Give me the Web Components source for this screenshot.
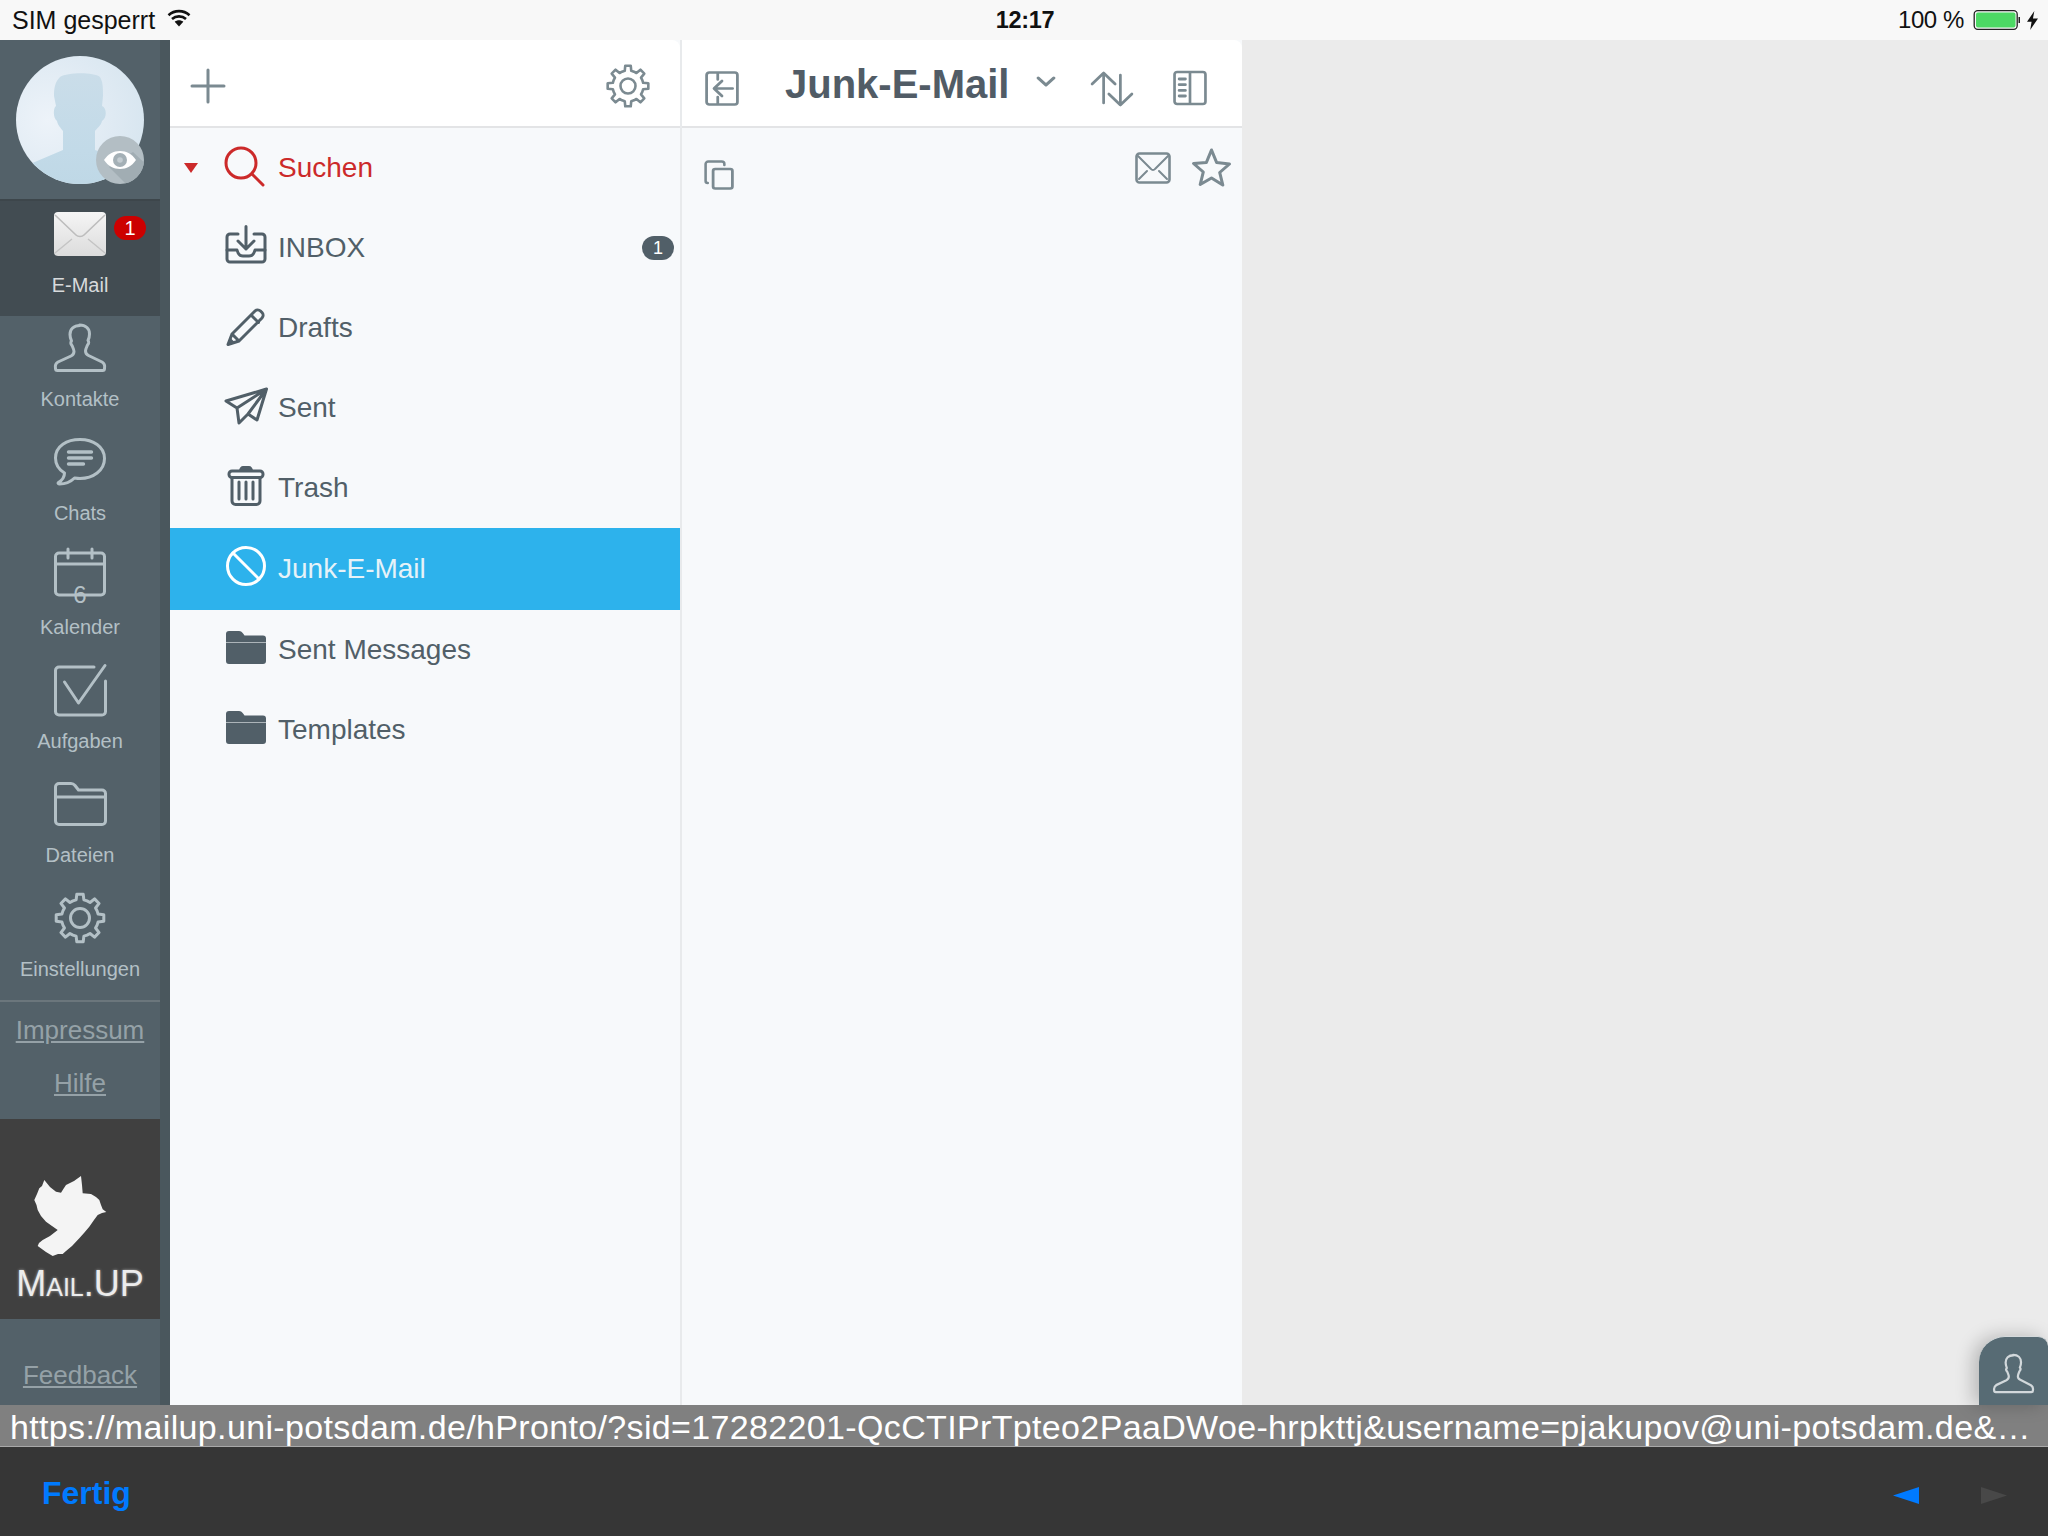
<!DOCTYPE html>
<html lang="de">
<head>
<meta charset="utf-8">
<title>Mail.UP</title>
<style>
html,body{margin:0;padding:0;background:#ebebeb;overflow:hidden}
body{width:2048px;height:1536px;font-family:"Liberation Sans",Arial,sans-serif}
</style>
</head>
<body>
<app-shell>
  <status-bar slot="top"></status-bar>
  <side-nav slot="side">
    <nav-item label="E-Mail" icon="mail" active badge="1"></nav-item>
    <nav-item label="Kontakte" icon="person"></nav-item>
    <nav-item label="Chats" icon="chat"></nav-item>
    <nav-item label="Kalender" icon="calendar"></nav-item>
    <nav-item label="Aufgaben" icon="tasks"></nav-item>
    <nav-item label="Dateien" icon="files"></nav-item>
    <nav-item label="Einstellungen" icon="gearnav"></nav-item>
  </side-nav>
  <folder-panel slot="folders">
    <folder-row label="Suchen" icon="search" tone="red" arrow></folder-row>
    <folder-row label="INBOX" icon="inbox" count="1"></folder-row>
    <folder-row label="Drafts" icon="pencil"></folder-row>
    <folder-row label="Sent" icon="plane"></folder-row>
    <folder-row label="Trash" icon="trash"></folder-row>
    <folder-row label="Junk-E-Mail" icon="block" selected></folder-row>
    <folder-row label="Sent Messages" icon="folder"></folder-row>
    <folder-row label="Templates" icon="folder"></folder-row>
  </folder-panel>
  <list-panel slot="list" title="Junk-E-Mail"></list-panel>
  <contact-tab slot="float"></contact-tab>
  <url-bar slot="url">https://mailup.uni-potsdam.de/hPronto/?sid=17282201-QcCTIPrTpteo2PaaDWoe-hrpkttj&amp;username=pjakupov@uni-potsdam.de&amp;…</url-bar>
  <browser-toolbar slot="bottom"></browser-toolbar>
</app-shell>

<script>
function gearPath(cx,cy,R,r,n){
  var d='',step=Math.PI*2/n,k=0;
  for(var i=0;i<n;i++){
    var a=i*step-Math.PI/2;
    var pts=[[r,a-step*.5],[r,a-step*.27],[R,a-step*.17],[R,a+step*.17],[r,a+step*.27]];
    pts.forEach(function(p){
      d+=(k++===0?'M':'L')+(cx+p[0]*Math.cos(p[1])).toFixed(2)+' '+(cy+p[0]*Math.sin(p[1])).toFixed(2);
    });
  }
  return d+'Z';
}
var PERSON='M26 1.5c-6.5 0-10 4-10 9 0 3 .8 5 1.5 6.5-1 1-1 3 .5 4.5.8 2 2 4 2 6 0 2-1 3.5-3 4.5L4 38c-2.5 1.5-3 4-2.5 6.5 0 1.5 1 2 2 2h45c1 0 2-.5 2-2 .5-2.5 0-5-2.5-6.5l-13.5-6.5c-2-1-3-2.5-3-4.5 0-2 1.2-4 2-6 1.5-1.5 1.5-3.5.5-4.5.7-1.5 1.5-3.5 1.5-6.5 0-5-3.5-9-10-9z';
var S='fill="none" stroke="currentColor" stroke-linecap="round" stroke-linejoin="round"';
var FOLDER='<path fill="currentColor" d="M5 6h10c2 0 3 1 4.5 3l1 1.5H39a3 3 0 0 1 3 3V36a3 3 0 0 1-3 3H5a3 3 0 0 1-3-3V9a3 3 0 0 1 3-3z"/><path d="M2 17.5h40" stroke="#f7f9fb" stroke-opacity=".55" stroke-width="1"/>';
var ICONS={
  mail:{w:52,h:44,b:'<defs><linearGradient id="m" x1="0" y1="0" x2="0" y2="1"><stop offset="0" stop-color="#f5f5f5"/><stop offset="1" stop-color="#dcdcdc"/></linearGradient></defs><rect width="52" height="44" rx="4" fill="url(#m)"/><path d="M1 3l21 20c2 2 6 2 8 0L51 3" fill="none" stroke="#bdbdbd" stroke-width="1.6"/><path d="M1 41l17-14M51 41L34 27" fill="none" stroke="#c4c4c4" stroke-width="1.4"/>'},
  person:{w:52,h:48,b:'<path '+S+' stroke-width="3" d="'+PERSON+'"/>'},
  chat:{w:52,h:48,b:'<path '+S+' stroke-width="3" d="M26 1.5C13 1.5 1.5 8 1.5 20c0 7 4 12 9 15 0 4-2 7-6 9.5-1 .8 0 1.5 1 1.5 6 0 11-2 15-6 2 .3 3.5.5 5.5.5 13 0 24.5-8 24.5-20S39 1.5 26 1.5z"/><path '+S+' stroke-width="3.4" d="M14.500 14h23M14.500 20h23M14.500 26h15"/>'},
  calendar:{w:52,h:56,b:'<path '+S+' stroke-width="3" d="M5 5h42a3.500 3.500 0 0 1 3.500 3.500v35a3.500 3.500 0 0 1-3.500 3.500H5a3.500 3.500 0 0 1-3.500-3.500v-35A3.500 3.500 0 0 1 5 5zM1.500 16h49M14 1v9M38 1v9"/><text x="26" y="55" text-anchor="middle" font-family="Liberation Sans,Arial,sans-serif" font-size="24" fill="currentColor">6</text>'},
  tasks:{w:52,h:52,b:'<path '+S+' stroke-width="3" d="M40 3H5a3.500 3.500 0 0 0-3.500 3.500v41A3.500 3.500 0 0 0 5 51h43a3.500 3.500 0 0 0 3.500-3.500V17"/><path '+S+' stroke-width="3" d="M10.500 18l14 21L51 1.500"/>'},
  files:{w:52,h:44,b:'<path '+S+' stroke-width="3" d="M1.500 15V5A3.500 3.500 0 0 1 5 1.500h12c2 0 3 .8 4 2l3.500 4.500H48a3.500 3.500 0 0 1 3.500 3.500V39a3.500 3.500 0 0 1-3.500 3.500H5A3.500 3.500 0 0 1 1.500 39zM1.500 15h50"/>'},
  gearnav:{w:52,h:52,b:'<path '+S+' stroke-width="3" d="'+gearPath(26,26,24,18.500,8)+'"/><circle cx="26" cy="26" r="9.500" '+S+' stroke-width="3"/>'},
  plus:{w:34,h:34,b:'<path '+S+' stroke-width="3" d="M17 1v32M1 17h32"/>'},
  gear:{w:44,h:44,b:'<path '+S+' stroke-width="2.600" d="'+gearPath(22,22,20.500,15.500,8)+'"/><circle cx="22" cy="22" r="7.500" '+S+' stroke-width="2.600"/>'},
  search:{w:44,h:44,b:'<circle cx="17" cy="20" r="15" '+S+' stroke-width="3"/><path '+S+' stroke-width="3" d="M28 31l11 11"/>'},
  inbox:{w:44,h:44,b:'<path '+S+' stroke-width="3" d="M14 11H6a3 3 0 0 0-3 3v22a3 3 0 0 0 3 3h32a3 3 0 0 0 3-3V14a3 3 0 0 0-3-3h-8"/><path '+S+' stroke-width="3" d="M3 27h10c1 4 3 6 6 6h6c3 0 5-2 6-6h10M22 3.500V26M14 18l8 8 8-8"/>'},
  pencil:{w:44,h:44,b:'<path '+S+' stroke-width="3" d="M8 31L31 8a4 4 0 0 1 5.500 0l1.500 1.500a4 4 0 0 1 0 5.500L15 38 4 41.500zM27 12l7.500 7.500M8 31l7 7"/><path fill="currentColor" d="M4 41.500l2-7 5 5z"/>'},
  plane:{w:44,h:44,b:'<path '+S+' stroke-width="3" d="M42.500 6L2 18l11 7 2 15 9-9 9 6zM42.500 6L13 25M42.500 6L24 31"/>'},
  trash:{w:44,h:44,b:'<path fill="currentColor" d="M15 8c0-3 2-5 4-5h6c2 0 4 2 4 5z"/><rect x="5" y="8" width="34" height="6.500" rx="3" '+S+' stroke-width="3"/><path '+S+' stroke-width="3" d="M8 15v23a3.500 3.500 0 0 0 3.500 3.500h21a3.500 3.500 0 0 0 3.500-3.500V15M15 19v17M22 19v17M29 19v17"/>'},
  block:{w:44,h:44,b:'<circle cx="22" cy="22" r="18.500" '+S+' stroke-width="3"/><path '+S+' stroke-width="3" d="M9 9l26 26"/>'},
  folder:{w:44,h:44,b:FOLDER},
  back:{w:34,h:35,vw:32,b:'<path '+S+' stroke-width="2.600" d="M4 1.500h24A2.500 2.500 0 0 1 30.500 4v27a2.500 2.500 0 0 1-2.500 2.500H4A2.500 2.500 0 0 1 1.500 31V4A2.500 2.500 0 0 1 4 1.500zM12 1.500v7M12 26v7.500M26 17.500H9M16 10l-7.500 7.500L16 25"/>'},
  chevron:{w:20,h:12,vw:18,b:'<path '+S+' stroke-width="3" d="M2 2l7 7 7-7"/>'},
  sort:{w:44,h:36,vw:42,b:'<path '+S+' stroke-width="2.600" d="M13 32V2M2 13L13 2l11 11M29 4v30M18 23l11 11 11-11"/>'},
  panel:{w:34,h:36,vw:33,b:'<path '+S+' stroke-width="2.600" d="M4 2h25a2.500 2.500 0 0 1 2.500 2.500v27A2.500 2.500 0 0 1 29 34H4a2.500 2.500 0 0 1-2.500-2.500v-27A2.500 2.500 0 0 1 4 2zM16.500 2v32"/><path '+S+' stroke-width="2.800" d="M6 9h6M6 14.700h6M6 20.400h6M6 26h6"/>'},
  copy:{w:30,h:30,vw:28,b:'<path '+S+' stroke-width="2.400" d="M19 5V4a2.500 2.500 0 0 0-2.500-2.500H4A2.500 2.500 0 0 0 1.500 4v17A2 2 0 0 0 3.500 23"/><rect x="8.500" y="9" width="18" height="19.500" rx="2" '+S+' stroke-width="2.600"/>'},
  envelope:{w:36,h:32,b:'<rect x="1.500" y="1.500" width="33" height="29" rx="3" '+S+' stroke-width="2.600"/><path '+S+' stroke-width="2" d="M3 4l13 13c1 1.300 3 1.300 4 0L33 4M4 27l8-8M32 27l-8-8"/>'},
  star:{w:39,h:40,vw:38,b:'<path '+S+' stroke-width="3" d="M19 3l5 12.500 12.500 1.500-9.500 8.500 3 12.500L19 31 8 37.500l3-12.500-9.500-8.500L14 15.500z"/>'},
  personTab:{w:42,h:40,b:'<path '+S+' stroke-width="2.800" transform="scale(.79 .82)" d="'+PERSON+'"/>'}
};

function def(name,css,html){
  customElements.define(name,class extends HTMLElement{
    connectedCallback(){
      if(this.shadowRoot)return;
      var r=this.attachShadow({mode:'open'});
      r.innerHTML='<style>'+css+'</style>'+(typeof html==='function'?html(this):html);
    }
  });
}

customElements.define('app-icon',class extends HTMLElement{
  connectedCallback(){
    if(this.shadowRoot)return;
    var i=ICONS[this.getAttribute('name')];
    var r=this.attachShadow({mode:'open'});
    r.innerHTML='<style>:host{display:block;width:'+i.w+'px;height:'+i.h+'px;flex:none}svg{display:block;overflow:visible}</style><svg width="'+i.w+'" height="'+i.h+'" viewBox="0 0 '+(i.vw||i.w)+' '+i.h+'" preserveAspectRatio="none">'+i.b+'</svg>';
  }
});

def('app-shell',
 ':host{display:flex;flex-direction:column;width:2048px;height:1536px;position:relative;background:#ebebeb;overflow:hidden}'+
 '.main{flex:1;min-height:0;display:flex;position:relative}'+
 '.rest{flex:1;background:#ebebeb}',
 '<slot name="top"></slot><div class="main"><slot name="side"></slot><slot name="folders"></slot><slot name="list"></slot><div class="rest"></div><slot name="float"></slot></div><slot name="url"></slot><slot name="bottom"></slot>');

def('status-bar',
 ':host{display:flex;align-items:center;height:40px;flex:none;background:#f8f8f8;color:#111;font:25px/40px "Liberation Sans",Arial,sans-serif}'+
 '.l{display:flex;align-items:center;padding-left:12px;flex:1 1 0}.w{margin-left:12px;margin-top:-5px}'+
 '.c{font-weight:700;font-size:23.500px;letter-spacing:-.3px}'+
 '.r{flex:1 1 0;display:flex;align-items:center;justify-content:flex-end;padding-right:10px}'+
 '.pct{margin-right:9px;font-size:24px;letter-spacing:-.4px}.bat{margin-right:6px}',
 '<div class="l"><span>SIM gesperrt</span><svg class="w" width="24" height="18" viewBox="0 0 24 18"><path fill="none" stroke="#111" stroke-width="2.600" d="M1.500 6.200C7.500 .8 16.500 .8 22.500 6.200M5 10c4-3.500 10-3.500 14 0"/><path fill="#111" d="M12 17.500l-4.300-4.700c2.500-2 6.100-2 8.600 0z"/></svg></div>'+
 '<div class="c">12:17</div>'+
 '<div class="r"><span class="pct">100 %</span><svg class="bat" width="48" height="20" viewBox="0 0 47 20"><rect x=".7" y=".7" width="43" height="18.600" rx="3.500" fill="none" stroke="#222" stroke-width="1.300"/><rect x="2.500" y="2.500" width="39.500" height="15" rx="2" fill="#4cd964"/><path fill="#222" d="M45 7h1.500v6H45z"/></svg><svg width="11" height="19" viewBox="0 0 12 23" preserveAspectRatio="none"><path fill="#111" d="M8 0L0 13h5L3.500 23 12 9H6.500z"/></svg></div>');

def('side-nav',
 ':host{display:flex;flex:none;width:170px;background:#4a575d}'+
 '.col{width:160px;display:flex;flex-direction:column;background:#536169;overflow:hidden}'+
 '.avatar{height:161px;flex:none;box-sizing:border-box;padding:16px 16px 0;border-bottom:2px solid #3d464b}'+
 '.avatar svg{display:block;overflow:visible}'+
 '.links{border-top:2px solid #6b767c;height:119px;box-sizing:border-box;padding-top:10px;display:flex;flex-direction:column;align-items:center;gap:17px;flex:none}'+
 'a{color:#95a1a7;text-decoration:underline;font-size:26px;line-height:36px;font-family:"Liberation Sans",Arial,sans-serif}'+
 '.logo{height:200px;flex:none;background:#404040;display:flex;flex-direction:column;align-items:center;padding-top:57px;box-sizing:border-box}'+
 '.bird{margin-left:-20px}'+
 '.brand{font-size:36px;line-height:40px;font-variant:small-caps;color:#ececec;margin-top:8px;text-shadow:0 0 3px rgba(255,255,255,.55)}'+
 '.fb{flex:1;display:flex;justify-content:center;padding-top:38px;box-sizing:border-box}',
 '<div class="col"><div class="avatar"><svg width="128" height="128" viewBox="0 0 128 128">'+
 '<defs><radialGradient id="g" cx=".25" cy=".5" r=".85"><stop offset="0" stop-color="#edf3f9"/><stop offset=".6" stop-color="#dfeaf3"/><stop offset="1" stop-color="#d6e5ef"/></radialGradient><linearGradient id="s" x1="0" y1="0" x2="0" y2="1"><stop offset="0" stop-color="#cadde9"/><stop offset=".7" stop-color="#c2dae8"/><stop offset="1" stop-color="#bfd8e6"/></linearGradient><clipPath id="cl"><circle cx="64" cy="64" r="64"/></clipPath><clipPath id="bc"><circle cx="104" cy="104" r="24"/></clipPath></defs>'+
 '<circle cx="64" cy="64" r="64" fill="url(#g)"/>'+
 '<path clip-path="url(#cl)" fill="url(#s)" d="M44 21C52 16 78 16 84 21C87 26 87 32 87 40L86 50C91 52 91 62 86 65C85 70 81 72 79 75V94L128 112V128H0V114L47 94V75C45 72 42 70 41 65C37 62 37 52 40 50L38 40C38 32 39 26 44 21Z"/>'+
 '<circle cx="104" cy="104" r="24" fill="#b3bec4"/>'+
 '<path clip-path="url(#bc)" fill="#a1adb3" d="M93 111L119 137 142 120 117 96z"/>'+
 '<path fill="#fff" d="M88 104c4-6 9.500-9 16-9s12 3 16 9c-4 6-9.500 9-16 9s-12-3-16-9z"/><circle cx="104" cy="104" r="7" fill="#a4b0b6"/><circle cx="104" cy="104" r="2.800" fill="#c3ccd1"/></svg></div>'+
 '<slot></slot>'+
 '<div class="links"><a>Impressum</a><a>Hilfe</a></div>'+
 '<div class="logo"><svg class="bird" width="73" height="80" viewBox="0 0 73 80"><path fill="#f4f4f4" d="M10.300 4L16 11 22 15.700 27 16.700 30 12 32 9 40 5 47 0 48 9 48.700 17.300 57 18 62 21 65.300 24 67 29 68.700 33.300 72.300 36 68 37 63.700 39 60 44 55.300 50.700 50 57 45.300 62.300 38 70 32 75 28.700 78 24 78 18.700 80 12 76 3.700 70 5 67 8.700 64 16 60 23.700 54 18 50 12 45.700 7 40 3.700 34 2.500 29 .3 24 3 18 5.300 12.300 8 10z"/></svg><div class="brand">Mail.UP</div></div>'+
 '<div class="fb"><a>Feedback</a></div></div>');

def('nav-item',
 ':host{display:block;position:relative;height:114px;color:#b3c0c6;font-family:"Liberation Sans",Arial,sans-serif}'+
 ':host([active]){height:115px;background:#424c52;color:#d7dadc}'+
 '.box{height:56px;padding-top:4px;display:flex;justify-content:center;align-items:center}'+
 ':host([active]) .box{padding-top:5px}'+
 '.lab{text-align:center;font-size:20px;line-height:24px;margin-top:11px}'+
 '.b{position:absolute;left:114px;top:15px;width:32px;height:24px;border-radius:12px;background:#cc0000;color:#fff;font-size:20px;line-height:24px;text-align:center}',
 function(h){var b=h.getAttribute('badge');return '<div class="box"><app-icon name="'+h.getAttribute('icon')+'"></app-icon></div><div class="lab">'+h.getAttribute('label')+'</div>'+(b?'<span class="b">'+b+'</span>':'');});

def('folder-panel',
 ':host{display:flex;flex-direction:column;flex:none;width:510px;background:#f7f9fb;border-right:2px solid #e8eaec}'+
 '.head{height:88px;flex:none;box-sizing:border-box;background:#fff;border-bottom:2px solid #e3e4e6;display:flex;align-items:center;justify-content:space-between;padding:6px 30px 0 21px;color:#7b8a91;border-top-right-radius:8px}',
 '<div class="head"><app-icon name="plus"></app-icon><app-icon name="gear"></app-icon></div><slot></slot>');

def('folder-row',
 ':host{display:flex;align-items:center;height:80px;flex:none;color:#515f68;font:28px "Liberation Sans",Arial,sans-serif}'+
 ':host([tone=red]){color:#cc2a2a}'+
 ':host([selected]){height:82px;background:#2db2ec;color:#e6f2f8}'+
 ':host([selected]) app-icon{color:#fff}'+
 '.a{width:54px;flex:none;padding-left:14px;box-sizing:border-box}'+
 '.t{display:block;width:0;height:0;border:7px solid transparent;border-top:10px solid #cc2a2a;border-bottom:0}'+
 'app-icon{margin-bottom:6px}'+
 '.l{margin-left:10px;flex:1}'+
 '.c{width:32px;height:24px;border-radius:12px;background:#515f68;color:#fff;font-size:18px;line-height:24px;text-align:center;margin-right:6px}',
 function(h){var c=h.getAttribute('count');return '<div class="a">'+(h.hasAttribute('arrow')?'<i class="t"></i>':'')+'</div><app-icon name="'+h.getAttribute('icon')+'"></app-icon><div class="l">'+h.getAttribute('label')+'</div>'+(c?'<div class="c">'+c+'</div>':'');});

def('list-panel',
 ':host{display:flex;flex-direction:column;flex:none;width:560px;background:#f7f9fb;color:#7b8a91}'+
 '.head{height:88px;flex:none;box-sizing:border-box;background:#fff;border-bottom:2px solid #e3e4e6;display:flex;align-items:center;padding:6px 0 0 23px;border-top-right-radius:8px}'+
 '.back{margin-top:4px}'+
 'h1{margin:-4px 0 0 46px;font:700 40px/44px "Liberation Sans",Arial,sans-serif;color:#515c66;width:251px;flex:none}'+
 '.chev{margin:-9px 0 0 0}.sort{margin:6px 0 0 34px}.panel{margin:3px 0 0 39px}'+
 '.row{display:flex;padding:19px 0 0 22px;align-items:flex-start}'+
 '.copy{margin-top:13px}.env{margin:5px 0 0 auto}.star{margin:0 11px 0 21px}',
 function(h){return '<div class="head"><app-icon class="back" name="back"></app-icon><h1>'+h.getAttribute('title')+'</h1><app-icon class="chev" name="chevron"></app-icon><app-icon class="sort" name="sort"></app-icon><app-icon class="panel" name="panel"></app-icon></div><div class="row"><app-icon class="copy" name="copy"></app-icon><app-icon class="env" name="envelope"></app-icon><app-icon class="star" name="star"></app-icon></div>';});

def('contact-tab',
 ':host{position:absolute;right:0;bottom:0;width:69px;height:69px;box-sizing:border-box;background:#576b74;border-radius:26px 10px 0 0;border-top:1px solid #d5dadc;box-shadow:-6px 0 18px rgba(0,0,0,.22);color:#d2d8db;display:flex;justify-content:center;padding-top:17px}',
 '<app-icon name="personTab"></app-icon>');

def('url-bar',
 ':host{display:block;flex:none;height:42px;box-sizing:border-box;background:#808080;border-bottom:1px solid #a9a9a9;color:#fff;font:34px/44px "Liberation Sans",Arial,sans-serif;padding-left:10px;white-space:nowrap;overflow:hidden;letter-spacing:.35px}',
 '<slot></slot>');

def('browser-toolbar',
 ':host{display:flex;align-items:center;flex:none;height:89px;background:#363636;padding:0 41px 0 42px;font:700 32px "Liberation Sans",Arial,sans-serif;color:#007aff}'+
 '.f{flex:1;margin-top:3px}.n{display:block;margin:8px 0 0 62px}',
 '<div class="f">Fertig</div><svg class="n" width="26" height="17" viewBox="0 0 26 17"><path fill="#007aff" d="M0 8.500L26 0v17z"/></svg><svg class="n" width="26" height="17" viewBox="0 0 26 17"><path fill="#484848" d="M26 8.500L0 0v17z"/></svg>');
</script>
</body>
</html>
